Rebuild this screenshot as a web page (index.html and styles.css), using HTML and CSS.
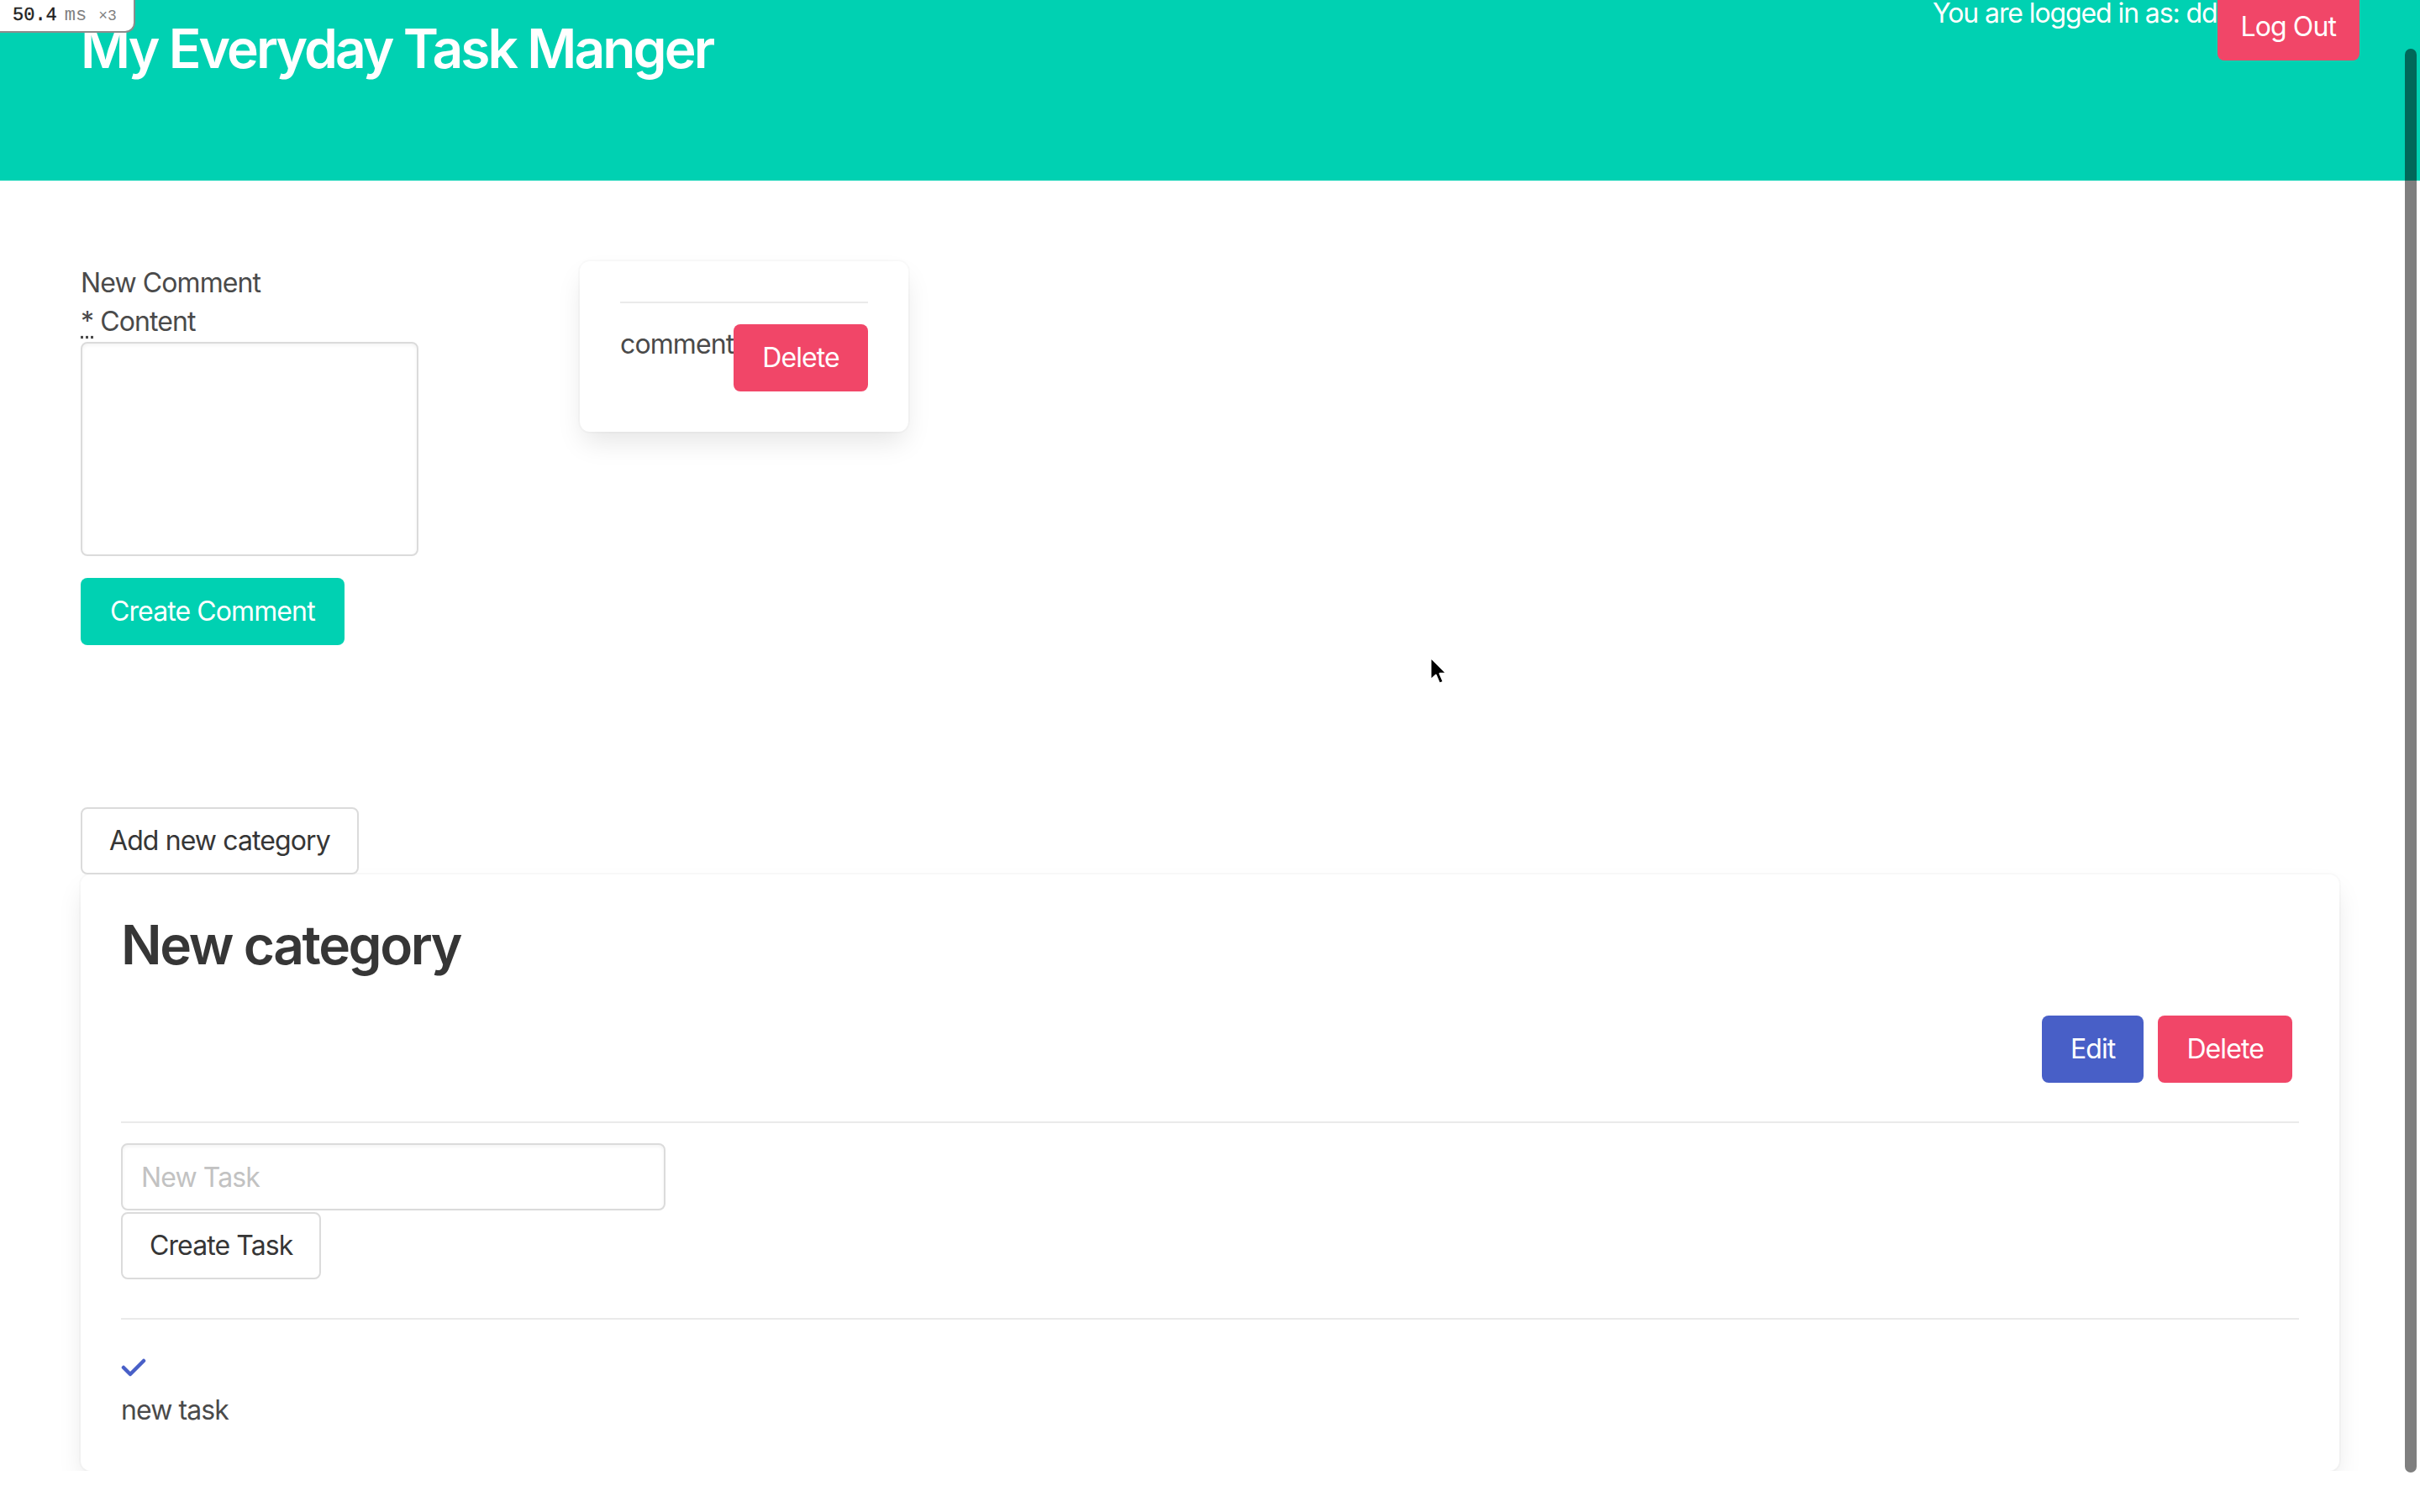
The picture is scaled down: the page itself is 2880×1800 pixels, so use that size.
FILE: index.html
```html
<!DOCTYPE html>
<html lang="en">
<head>
<meta charset="utf-8">
<title>My Everyday Task Manger</title>
<link rel="stylesheet" href="styles.css">
</head>
<body>
<div class="perf-badge"><span class="perf-num">50.4</span><span class="perf-unit">ms</span><span class="perf-mult">×3</span></div>

<header class="hero">
  <h1 class="brand">My Everyday Task Manger</h1>
  <div class="account">
    <span class="who">You are logged in as: dd</span>
    <a class="button is-danger logout" href="#">Log Out</a>
  </div>
</header>

<main>
  <section class="section comments">
    <form class="comment-form">
      <p class="form-title">New Comment</p>
      <label class="field-label"><abbr title="required">*</abbr> Content</label>
      <textarea class="content-input"></textarea>
      <button type="button" class="button is-primary create-comment">Create Comment</button>
    </form>
    <div class="box comment-card">
      <hr class="rule rule-top">
      <div class="comment-row">
        <span class="comment-text">comment</span><button type="button" class="button is-danger">Delete</button>
      </div>
    </div>
  </section>

  <section class="section categories">
    <button type="button" class="button">Add new category</button>
    <div class="box category">
      <h2 class="title">New category</h2>
      <div class="actions">
        <button type="button" class="button is-link">Edit</button>
        <button type="button" class="button is-danger">Delete</button>
      </div>
      <hr class="rule">
      <input class="input task-input" type="text" placeholder="New Task">
      <button type="button" class="button create-task">Create Task</button>
      <hr class="rule">
      <div class="task-check">
        <svg width="30" height="22" viewBox="0 0 30 22"><polyline points="3,11 11,19 27,3" fill="none" stroke="#485fc7" stroke-width="4.5" stroke-linecap="round" stroke-linejoin="round"/></svg>
      </div>
      <p class="task-name">new task</p>
    </div>
  </section>
</main>

<div class="scroll-thumb"></div>
<svg class="cursor" width="26" height="38" viewBox="0 0 24 36"><path d="M2 1.5 L2 27 L8 21.5 L12 31 L16.5 29 L12.5 19.8 L20.5 19.8 Z" fill="#000" stroke="#fff" stroke-width="2" stroke-linejoin="round"/></svg>
</body>
</html>
```

FILE: styles.css
```css
html, body {
  margin: 0;
  padding: 0;
  overflow: hidden;
}

body {
  font-family: Inter, "Noto Sans", sans-serif;
  font-size: 32px;
  line-height: 1.5;
  letter-spacing: -0.9px;
  color: #4a4a4a;
  background: #ffffff;
}

/* perf badge overlay */
.perf-badge {
  position: absolute;
  top: 0;
  left: 0;
  width: 144px;
  height: 37px;
  padding-left: 15px;
  background: #ffffff;
  border-right: 2px solid #8c8c8c;
  border-bottom: 2px solid #8c8c8c;
  border-bottom-right-radius: 12px;
  display: flex;
  align-items: center;
  letter-spacing: 0;
  z-index: 10;
  line-height: 1;
}
.perf-num {
  font-family: "Liberation Mono", monospace;
  font-size: 22px;
  color: #1e1e1e;
  -webkit-text-stroke: 0.4px #1e1e1e;
}
.perf-unit {
  font-family: "Liberation Mono", monospace;
  font-size: 22px;
  color: #808080;
  margin-left: 9px;
}
.perf-mult {
  font-family: "Liberation Mono", monospace;
  font-size: 18px;
  color: #808080;
  margin-left: 14px;
}

/* header */
.hero {
  background: #00d1b2;
  height: 215px;
  display: flex;
  justify-content: space-between;
  align-items: flex-start;
  padding: 0 72px 0 96px;
}
.brand {
  margin: 22px 0 0;
  font-size: 64px;
  line-height: 72px;
  font-weight: 600;
  color: #ffffff;
  letter-spacing: -2.9px;
}
.account {
  display: flex;
  align-items: flex-start;
  margin-top: -8px;
}
.who {
  color: #ffffff;
  font-size: 32px;
  line-height: 48px;
  font-weight: 400;
  letter-spacing: -1.1px;
}

/* buttons */
.button {
  display: inline-flex;
  align-items: center;
  justify-content: center;
  box-sizing: border-box;
  height: 80px;
  padding: 0 32px;
  border: 2px solid #dbdbdb;
  border-radius: 8px;
  background: #ffffff;
  color: #363636;
  font-family: inherit;
  font-size: 32px;
  line-height: 1.5;
  letter-spacing: inherit;
  text-decoration: none;
  white-space: nowrap;
  vertical-align: top;
}
.button.is-primary {
  background: #00d1b2;
  border-color: transparent;
  color: #ffffff;
}
.button.is-danger {
  background: #f14668;
  border-color: transparent;
  color: #ffffff;
}
.button.is-link {
  background: #485fc7;
  border-color: transparent;
  color: #ffffff;
}
.logout {
  color: #ffd3dc;
  padding: 0 26px;
}

/* sections */
.section {
  padding: 96px 96px;
}

.comments {
  display: flex;
  align-items: flex-start;
  padding-bottom: 96px;
}
.comment-form {
  flex: 0 0 594px;
  display: flex;
  flex-direction: column;
  align-items: flex-start;
}
.form-title {
  margin: 0;
  line-height: 48px;
  padding-top: 2px;
  margin-bottom: -2px;
}
.field-label {
  line-height: 48px;
}
.field-label abbr {
  text-decoration: underline dotted;
  text-underline-offset: 6px;
}
.content-input {
  box-sizing: border-box;
  width: 402px;
  height: 255px;
  border: 2px solid #dbdbdb;
  border-radius: 8px;
  box-shadow: inset 0 2px 4px rgba(10, 10, 10, 0.05);
  resize: none;
  font-family: inherit;
  font-size: 32px;
  margin: 0;
}
.create-comment {
  margin-top: 26px;
  padding: 0 33px;
}

.box {
  background: #ffffff;
  border-radius: 12px;
  box-shadow: 0 16px 32px -4px rgba(10, 10, 10, 0.1), 0 0 0 2px rgba(10, 10, 10, 0.02);
  padding: 48px;
}
.comment-card {
  flex: 0 0 auto;
}
.rule {
  border: 0;
  height: 2px;
  background: #eaeaea;
  margin: 46px 0 24px;
}
.rule-top {
  margin-top: 0;
  margin-bottom: 25px;
}
.comment-row {
  display: flex;
  align-items: flex-start;
}
.comment-text {
  line-height: 48px;
}

.categories {
  padding-top: 97px;
  padding-bottom: 0;
}
.title {
  margin: 0 0 48px;
  font-size: 64px;
  line-height: 72px;
  font-weight: 600;
  color: #363636;
  letter-spacing: -2.4px;
}
.actions {
  display: flex;
  justify-content: flex-end;
  gap: 17px;
  padding-right: 8px;
}
.task-input {
  display: block;
  box-sizing: border-box;
  width: 648px;
  height: 80px;
  padding: 0 22px;
  border: 2px solid #dbdbdb;
  border-radius: 8px;
  box-shadow: inset 0 2px 4px rgba(10, 10, 10, 0.05);
  font-family: inherit;
  font-size: 32px;
  letter-spacing: inherit;
  color: #363636;
  margin: 0;
}
.task-input::placeholder {
  color: #c2c2c2;
}
.create-task {
  display: flex;
  width: max-content;
  margin-top: 2px;
}
.task-check {
  height: 60px;
  box-sizing: border-box;
  padding-top: 22px;
}
.task-check svg {
  display: block;
}
.task-name {
  margin: 0;
  line-height: 48px;
}

/* overlay scrollbar */
.scroll-thumb {
  position: fixed;
  top: 58px;
  right: 4px;
  width: 14px;
  height: 1695px;
  border-radius: 7px;
  background: rgba(0, 0, 0, 0.5);
}
.cursor {
  position: fixed;
  left: 1700px;
  top: 781px;
}
```
